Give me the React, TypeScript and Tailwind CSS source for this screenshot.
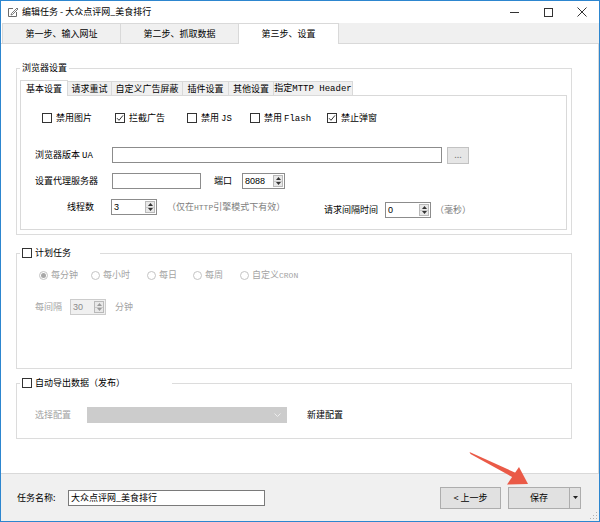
import React from "react";

function CheckBox({ checked = false }: { checked?: boolean }) {
  return (
    <span className="inline-flex w-[10px] h-[10px] shrink-0 items-center justify-center border border-[#333333] bg-white">
      {checked && (
        <svg width="8" height="8" viewBox="0 0 8 8">
          <path d="M1 4.2 L3 6.3 L7 1.4" fill="none" stroke="#333333" strokeWidth="1" />
        </svg>
      )}
    </span>
  );
}

function Radio({ checked = false, label, className }: { checked?: boolean; label: React.ReactNode; className: string }) {
  return (
    <div className={`flex items-center gap-[3px] ${className}`}>
      <span className="flex w-[9px] h-[9px] shrink-0 items-center justify-center rounded-full border border-[#c4c4c4] bg-white">
        {checked && <span className="w-[5px] h-[5px] rounded-full bg-[#a8a8a8]" />}
      </span>
      <span className="text-[#a3a3a3]">{label}</span>
    </div>
  );
}

function Spinner({ value, className, disabled = false }: { value: string; className: string; disabled?: boolean }) {
  return (
    <div
      className={`flex h-[16px] shrink-0 border ${
        disabled ? "border-[#cccccc] bg-[#f0f0f0] text-[#8a8a8a]" : "border-[#8c8c8c] bg-white"
      } ${className}`}
    >
      <span className="flex-1 pl-[2px] leading-[14px] font-['Liberation_Sans',sans-serif]">{value}</span>
      <div className="my-[1px] mr-[1px] flex w-[10px] flex-col border border-[#b9b9b9] bg-[#e8e8e8]">
        <div className="flex flex-1 items-center justify-center border-b border-[#c8c8c8]">
          <svg width="5" height="3" viewBox="0 0 5 3">
            <path d="M0 3 L2.5 0 L5 3 Z" fill={disabled ? "#9a9a9a" : "#333"} />
          </svg>
        </div>
        <div className="flex flex-1 items-center justify-center">
          <svg width="5" height="3" viewBox="0 0 5 3">
            <path d="M0 0 L2.5 3 L5 0 Z" fill={disabled ? "#9a9a9a" : "#333"} />
          </svg>
        </div>
      </div>
    </div>
  );
}

function InnerTab({ label, className, active = false }: { label: React.ReactNode; className: string; active?: boolean }) {
  return (
    <div
      className={`flex items-center justify-center border-t border-l border-r border-[#d9d9d9] ${
        active ? "h-[16px] -mb-px bg-white" : "h-[14px] bg-[#f0f0f0] -ml-px"
      } ${className}`}
    >
      {label}
    </div>
  );
}

export default function App() {
  return (
    <div className="relative flex h-[522px] w-[600px] flex-col overflow-hidden border border-[#2d86cf] bg-white text-[9px] leading-[12px] text-black font-['Noto_Sans_CJK_SC',sans-serif]">
      {/* title bar */}
      <div className="flex h-[22px] shrink-0 items-center">
        <div className="ml-[6px] flex w-[15px] items-center">
          <svg width="12" height="12" viewBox="0 0 12 12">
            <path d="M1.5 2.5 H6 M1.5 2.5 V10.5 H9.5 V6" fill="none" stroke="#6b6b6b" strokeWidth="1" />
            <path d="M4.5 7.5 L10 2 L11 3 L5.5 8.5 L4 9 Z" fill="none" stroke="#6b6b6b" strokeWidth="0.9" />
          </svg>
        </div>
        <span>编辑任务 - 大众点评网_美食排行</span>
        <div className="ml-auto flex h-full">
          <div className="flex w-[34px] items-center justify-center">
            <div className="h-px w-[9px] bg-[#333]" />
          </div>
          <div className="flex w-[34px] items-center justify-center">
            <div className="h-[9px] w-[9px] border border-[#333]" />
          </div>
          <div className="flex w-[34px] items-center justify-center">
            <svg width="10" height="10" viewBox="0 0 10 10">
              <path d="M0.5 0.5 L9.5 9.5 M9.5 0.5 L0.5 9.5" stroke="#333" strokeWidth="1" />
            </svg>
          </div>
        </div>
      </div>

      {/* main tabs */}
      <div className="flex h-[21px] shrink-0">
        <div className="w-[1px] border-b border-[#d9d9d9]" />
        <div className="flex w-[118px] items-center justify-center border-t border-l border-b border-[#d9d9d9] bg-[#f0f0f0]">
          第一步、输入网址
        </div>
        <div className="flex w-[118px] items-center justify-center border-t border-l border-b border-[#d9d9d9] bg-[#f0f0f0]">
          第二步、抓取数据
        </div>
        <div className="flex w-[101px] items-center justify-center border-t border-l border-r border-[#d9d9d9] bg-white">
          第三步、设置
        </div>
        <div className="flex-1 border-b border-[#d9d9d9] bg-[#f0f0f0]" />
      </div>

      {/* page */}
      <div className="flex h-[430px] shrink-0 flex-col border-r border-b border-[#d9d9d9] pl-[15px]">
        {/* browser settings */}
        <fieldset className="mt-[18px] w-[556px] border border-[#dcdcdc]">
          <legend className="ml-[3px] h-[12px] px-[2px]">浏览器设置</legend>
          <div className="ml-[3px] mt-[6px] flex items-end">
            <InnerTab active label="基本设置" className="w-[48px]" />
            <InnerTab label="请求重试" className="w-[45px]" />
            <InnerTab label="自定义广告屏蔽" className="w-[72px]" />
            <InnerTab label="插件设置" className="w-[47px]" />
            <InnerTab label="其他设置" className="w-[46px]" />
            <InnerTab
              label={
                <span>
                  指定<span className="font-['Liberation_Mono',monospace] text-[9px]">MTTP Header</span>
                </span>
              }
              className="w-[80px]"
            />
          </div>
          <div className="mb-[4px] ml-[3px] h-[135px] w-[547px] border border-[#d9d9d9] bg-white">
            <div className="mt-[16px] flex h-[12px] items-center pl-[21px]">
              <div className="flex w-[73px] items-center gap-[4px]">
                <CheckBox />
                <span>禁用图片</span>
              </div>
              <div className="flex w-[72px] items-center gap-[4px]">
                <CheckBox checked />
                <span>拦截广告</span>
              </div>
              <div className="flex w-[63px] items-center gap-[4px]">
                <CheckBox />
                <span>
                  禁用 <span className="font-['Liberation_Mono',monospace] text-[9px]">JS</span>
                </span>
              </div>
              <div className="flex w-[77px] items-center gap-[4px]">
                <CheckBox />
                <span>
                  禁用 <span className="font-['Liberation_Mono',monospace] text-[9px]">Flash</span>
                </span>
              </div>
              <div className="flex items-center gap-[4px]">
                <CheckBox checked />
                <span>禁止弹窗</span>
              </div>
            </div>

            <div className="mt-[23px] flex h-[16px] items-center pl-[14px]">
              <span className="w-[77px]">
                浏览器版本 <span className="font-['Liberation_Mono',monospace] text-[9px]">UA</span>
              </span>
              <div className="h-[16px] w-[330px] border border-[#8c8c8c] bg-white" />
              <div className="ml-[5px] flex h-[17px] w-[22px] items-center justify-center border border-[#c2c2c2] bg-[#e6e6e6] text-[#7a7a7a]">
                ...
              </div>
            </div>

            <div className="mt-[10px] flex h-[16px] items-center pl-[14px]">
              <span className="w-[77px]">设置代理服务器</span>
              <div className="h-[16px] w-[89px] border border-[#8c8c8c] bg-white" />
              <span className="ml-[13px] w-[28px]">端口</span>
              <Spinner value="8088" className="w-[43px]" />
            </div>

            <div className="mt-[10px] flex h-[16px] items-start pl-[46px]">
              <span className="w-[44px] leading-[16px]">线程数</span>
              <Spinner value="3" className="w-[46px]" />
              <span className="ml-[10px] w-[157px] leading-[16px] text-[#7d7d7d]">
                （仅在<span className="font-['Liberation_Mono',monospace] text-[8px]">HTTP</span>引擎模式下有效）
              </span>
              <div className="mt-[3px] flex items-start">
                <span className="w-[61px] leading-[16px]">请求间隔时间</span>
                <Spinner value="0" className="w-[46px]" />
                <span className="ml-[4px] leading-[16px] text-[#7d7d7d]">（毫秒）</span>
              </div>
            </div>
          </div>
        </fieldset>

        {/* schedule */}
        <fieldset className="mt-[12px] w-[556px] border border-[#dcdcdc] pb-[53px]">
          <legend className="ml-[3px] flex h-[12px] w-[80px] items-center gap-[3px] pl-[2px]">
            <CheckBox />
            <span>计划任务</span>
          </legend>
          <div className="mt-[10px] flex h-[12px] items-center pl-[22px]">
            <Radio checked label="每分钟" className="w-[52px]" />
            <Radio label="每小时" className="w-[56px]" />
            <Radio label="每日" className="w-[46px]" />
            <Radio label="每周" className="w-[47px]" />
            <Radio
              label={
                <span>
                  自定义<span className="font-['Liberation_Mono',monospace] text-[8px]">CRON</span>
                </span>
              }
              className=""
            />
          </div>
          <div className="mt-[18px] flex h-[16px] items-center pl-[18px]">
            <span className="w-[35px] text-[#a3a3a3]">每间隔</span>
            <Spinner disabled value="30" className="w-[36px]" />
            <span className="ml-[9px] text-[#a3a3a3]">分钟</span>
          </div>
        </fieldset>

        {/* export */}
        <fieldset className="mt-[8px] w-[556px] border border-[#dcdcdc] pb-[15px]">
          <legend className="ml-[3px] flex h-[12px] w-[152px] items-center gap-[3px] pl-[2px]">
            <CheckBox />
            <span>自动导出数据（发布）</span>
          </legend>
          <div className="mt-[18px] flex h-[16px] items-center pl-[18px]">
            <span className="w-[52px] text-[#a3a3a3]">选择配置</span>
            <div className="flex h-[16px] w-[200px] items-center justify-end border border-[#cccccc] bg-[#cccccc] pr-[5px]">
              <svg width="7" height="4" viewBox="0 0 7 4">
                <path d="M0.5 0.5 L3.5 3.5 L6.5 0.5" fill="none" stroke="#ededed" strokeWidth="1" />
              </svg>
            </div>
            <span className="ml-[20px]">新建配置</span>
          </div>
        </fieldset>
      </div>

      {/* bottom bar */}
      <div className="flex flex-1 items-center bg-[#f0f0f0] pl-[16px] pr-[18px]">
        <span className="w-[51px]">任务名称:</span>
        <div className="flex h-[16px] w-[197px] items-center border border-[#7a7a7a] bg-white pl-[2px] leading-[14px]">
          大众点评网_美食排行
        </div>
        <div className="ml-auto flex items-center">
          <div className="flex h-[22px] w-[61px] items-center justify-center border border-[#adadad] bg-[#e1e1e1]">
            &lt; 上一步
          </div>
          <div className="ml-[7px] flex h-[22px] w-[62px] items-center justify-center border border-[#adadad] bg-[#e1e1e1]">
            保存
          </div>
          <div className="flex h-[22px] w-[11px] items-center justify-center border border-l-0 border-[#adadad] bg-[#e1e1e1]">
            <svg width="5" height="3" viewBox="0 0 5 3">
              <path d="M0 0 L2.5 3 L5 0 Z" fill="#222" />
            </svg>
          </div>
        </div>
      </div>

      {/* resize grip */}
      <svg className="absolute bottom-[1px] right-[1px]" width="8" height="8" viewBox="0 0 8 8">
        <rect x="6" y="0" width="1" height="1" fill="#b0b0b0" />
        <rect x="3" y="3" width="1" height="1" fill="#b0b0b0" />
        <rect x="6" y="3" width="1" height="1" fill="#b0b0b0" />
        <rect x="0" y="6" width="1" height="1" fill="#b0b0b0" />
        <rect x="3" y="6" width="1" height="1" fill="#b0b0b0" />
        <rect x="6" y="6" width="1" height="1" fill="#b0b0b0" />
      </svg>

      {/* annotation arrow */}
      <svg className="pointer-events-none absolute left-0 top-0" width="600" height="522" viewBox="0 0 600 522">
        <polygon points="468.5,451 469.5,453 513,477 515,472" fill="#ea5a47" />
        <polygon points="527,483 506,483.5 518,466" fill="#ea5a47" />
      </svg>
    </div>
  );
}
